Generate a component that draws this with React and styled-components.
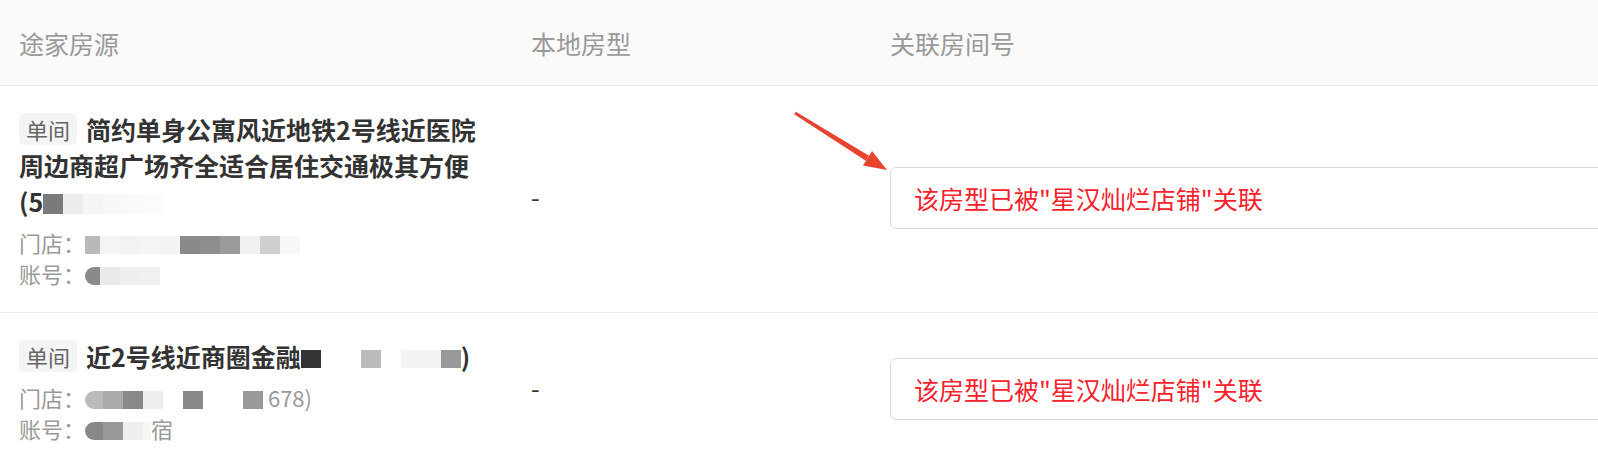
import styled, { createGlobalStyle } from "styled-components";

const GlobalStyle = createGlobalStyle`
  html, body {
    margin: 0;
    padding: 0;
    background: #fff;
    overflow: hidden;
  }
  body {
    font-family: "Noto Sans CJK SC", "Noto Sans", sans-serif;
  }
`;

const Page = styled.div`
  position: relative;
  width: 1598px;
  height: 466px;
  overflow: hidden;
`;

const HeaderRow = styled.div`
  display: grid;
  grid-template-columns: 512px 359px 1fr;
  align-items: center;
  height: 85px;
  background: #fafafa;
  border-bottom: 1px solid #ececec;
`;

const HeadCell = styled.div`
  padding-left: 19px;
  font-size: 25px;
  line-height: 36px;
  color: #999;
`;

const BodyRow = styled.div`
  display: grid;
  grid-template-columns: 512px 359px 1fr;
  align-items: center;
  padding: 25px 0 23px;
  border-bottom: ${(p) => (p.$last ? "none" : "1px solid #ebebeb")};
`;

const Cell = styled.div`
  padding: 0 19px;
  min-width: 0;
`;

const Title = styled.div`
  font-size: 25px;
  line-height: 36px;
  font-weight: 700;
  color: #333;
`;

const Tag = styled.span`
  display: inline-block;
  height: 32px;
  line-height: 32px;
  padding: 0 7px;
  margin-right: 9px;
  border-radius: 5px;
  background: #f4f4f4;
  color: #666;
  font-size: 22px;
  font-weight: 400;
  vertical-align: 1px;
`;

const Meta = styled.div`
  margin-top: ${(p) => (p.$first ? "8px" : "0")};
  font-size: 22px;
  line-height: 31px;
  color: #999;
`;

const Mosaic = styled.span`
  display: inline-flex;
  vertical-align: middle;
  margin-top: -3px;
`;

const Block = styled.span`
  display: inline-block;
  width: ${(p) => p.$w}px;
  height: ${(p) => p.$h}px;
  background: ${(p) => p.$c};
  border-radius: ${(p) => (p.$round ? "9px 0 0 9px" : "0")};
`;

const Dash = styled.div`
  padding-bottom: 9px;
  font-size: 25px;
  line-height: 36px;
  color: #333;
`;

const LinkCell = styled(Cell)`
  padding-bottom: 5px;
`;

const LinkBox = styled.div`
  display: flex;
  align-items: center;
  width: 780px;
  height: 60px;
  padding-left: 23px;
  border: 1px solid #d9d9d9;
  border-radius: 6px;
  color: #f5222d;
  font-size: 25px;
`;

const Arrow = styled.svg`
  position: absolute;
  left: 0;
  top: 0;
  pointer-events: none;
`;

const Blur = ({ cells, h = 18 }) => (
  <Mosaic>
    {cells.map(([c, w, round], i) => (
      <Block key={i} $c={c} $w={w} $h={h} $round={round} />
    ))}
  </Mosaic>
);

const LINKED = '该房型已被"星汉灿烂店铺"关联';

export default function App() {
  return (
    <Page>
      <GlobalStyle />
      <HeaderRow>
        <HeadCell>途家房源</HeadCell>
        <HeadCell>本地房型</HeadCell>
        <HeadCell>关联房间号</HeadCell>
      </HeaderRow>

      <BodyRow>
        <Cell>
          <Title>
            <Tag>单间</Tag>
            简约单身公寓风近地铁2号线近医院周边商超广场齐全适合居住交通极其方便 (5
            <Blur
              h={20}
              cells={[
                ["#7a7a7a", 20],
                ["#ececec", 20],
                ["#f5f5f5", 20],
                ["#f8f8f8", 20],
                ["#f9f9f9", 20],
                ["#fbfbfb", 20],
              ]}
            />
          </Title>
          <Meta $first>
            门店：
            <Blur
              cells={[
                ["#b9b9b9", 15],
                ["#f4f4f4", 20],
                ["#f2f2f2", 20],
                ["#f5f5f5", 20],
                ["#f3f3f3", 20],
                ["#8a8a8a", 20],
                ["#8e8e8e", 20],
                ["#9a9a9a", 20],
                ["#f1f1f1", 20],
                ["#cfcfcf", 20],
                ["#f7f7f7", 20],
              ]}
            />
          </Meta>
          <Meta>
            账号：
            <Blur
              cells={[
                ["#8a8a8a", 15, true],
                ["#e9e9e9", 20],
                ["#eeeeee", 20],
                ["#f0f0f0", 20],
              ]}
            />
          </Meta>
        </Cell>
        <Cell>
          <Dash>-</Dash>
        </Cell>
        <LinkCell>
          <LinkBox>{LINKED}</LinkBox>
        </LinkCell>
      </BodyRow>

      <BodyRow $last>
        <Cell>
          <Title>
            <Tag>单间</Tag>
            近2号线近商圈金融
            <Blur
              cells={[
                ["#333333", 20],
                ["transparent", 40],
                ["#bbbbbb", 20],
                ["transparent", 20],
                ["#f3f3f3", 40],
                ["#999999", 20],
              ]}
            />
            )
          </Title>
          <Meta $first>
            门店：
            <Blur
              cells={[
                ["#bbbbbb", 18, true],
                ["#aaaaaa", 20],
                ["#888888", 20],
                ["#eeeeee", 20],
                ["transparent", 20],
                ["#888888", 20],
                ["transparent", 40],
                ["#999999", 20],
              ]}
            />
            {" "}678)
          </Meta>
          <Meta>
            账号：
            <Blur
              cells={[
                ["#888888", 18, true],
                ["#999999", 20],
                ["#eeeeee", 20],
                ["#f5f5f5", 8],
              ]}
            />
            宿
          </Meta>
        </Cell>
        <Cell>
          <Dash>-</Dash>
        </Cell>
        <LinkCell>
          <LinkBox>{LINKED}</LinkBox>
        </LinkCell>
      </BodyRow>

      <Arrow width="1598" height="466" viewBox="0 0 1598 466">
        <polygon
          points="795.8,111.7 794.2,114.3 865.8,160.8 869,155.8"
          fill="#e8432e"
        />
        <polygon points="887,170 863,165.5 872,151" fill="#e8432e" />
      </Arrow>
    </Page>
  );
}
